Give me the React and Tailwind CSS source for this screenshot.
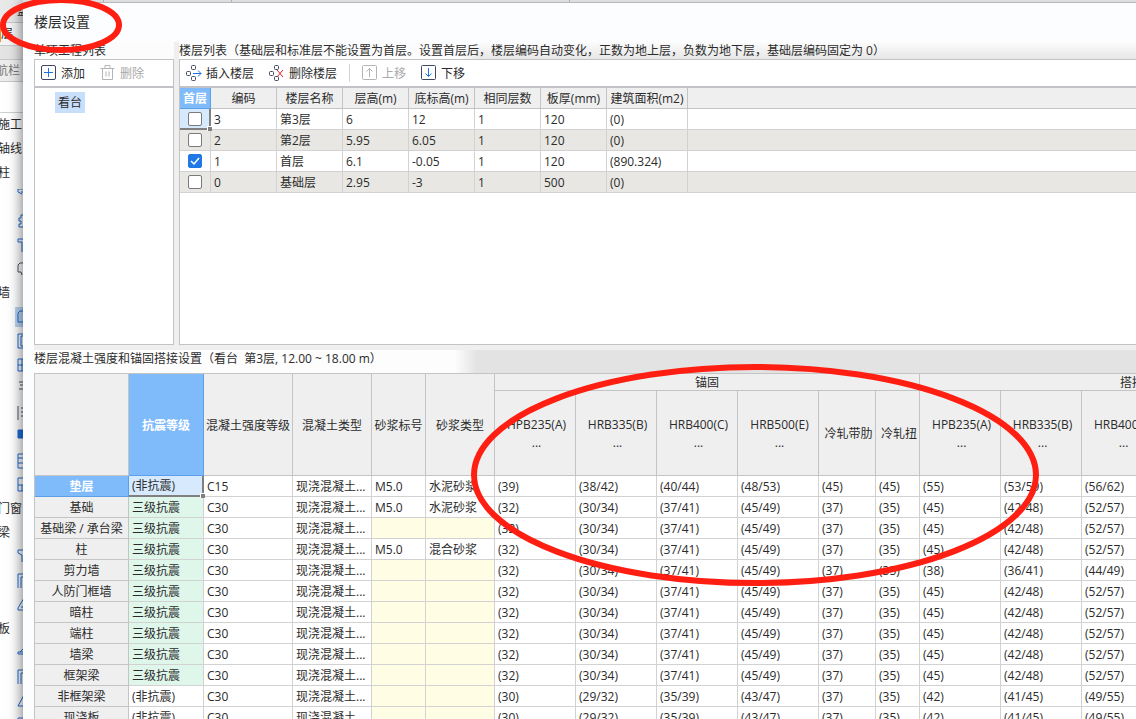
import React, {useState} from "react";

const FLOOR_COLUMNS = [
    { title: "编码", width: "w-[66px]" },
    { title: "楼层名称", width: "w-[66px]" },
    { title: "层高(m)", width: "w-[66px]" },
    { title: "底标高(m)", width: "w-[66px]" },
    { title: "相同层数", width: "w-[66px]" },
    { title: "板厚(mm)", width: "w-[66px]" },
    { title: "建筑面积(m2)", width: "w-[81px]" },
];

const FLOORS = [
    ["3", "第3层", "6", "12", "1", "120", "(0)"],
    ["2", "第2层", "5.95", "6.05", "1", "120", "(0)"],
    ["1", "首层", "6.1", "-0.05", "1", "120", "(890.324)"],
    ["0", "基础层", "2.95", "-3", "1", "500", "(0)"],
];

const STEEL_WIDTHS = [
    "w-[94px]", "w-[75px]", "w-[89px]", "w-[79px]", "w-[54px]", "w-[69px]",
    "w-[81px]", "w-[81px]", "w-[81px]", "w-[81px]", "w-[57px]", "w-[44px]",
    "w-[81px]", "w-[81px]", "w-[81px]", "w-[182px]",
];

const BAR_TYPES = [
    "HPB235(A)", "HRB335(B)", "HRB400(C)", "HRB500(E)", "冷轧带肋", "冷轧扭",
    "HPB235(A)", "HRB335(B)", "HRB400(C)", "",
];

const DEFAULT_BARS = ["(32)", "(30/34)", "(37/41)", "(45/49)", "(37)", "(35)", "(45)", "(42/48)", "(52/57)"];
const PLAIN_BARS = ["(30)", "(29/32)", "(35/39)", "(43/47)", "(37)", "(35)", "(42)", "(41/45)", "(49/55)"];

const MEMBERS = [
    { name: "垫层", level: "(非抗震)", grade: "C15", mark: "M5.0", mortar: "水泥砂浆",
        bars: ["(39)", "(38/42)", "(40/44)", "(48/53)", "(45)", "(45)", "(55)", "(53/59)", "(56/62)"] },
    { name: "基础", level: "三级抗震", grade: "C30", mark: "M5.0", mortar: "水泥砂浆", bars: DEFAULT_BARS },
    { name: "基础梁 / 承台梁", level: "三级抗震", grade: "C30", bars: DEFAULT_BARS },
    { name: "柱", level: "三级抗震", grade: "C30", mark: "M5.0", mortar: "混合砂浆", bars: DEFAULT_BARS },
    { name: "剪力墙", level: "三级抗震", grade: "C30",
        bars: ["(32)", "(30/34)", "(37/41)", "(45/49)", "(37)", "(35)", "(38)", "(36/41)", "(44/49)"] },
    { name: "人防门框墙", level: "三级抗震", grade: "C30", bars: DEFAULT_BARS },
    { name: "暗柱", level: "三级抗震", grade: "C30", bars: DEFAULT_BARS },
    { name: "端柱", level: "三级抗震", grade: "C30", bars: DEFAULT_BARS },
    { name: "墙梁", level: "三级抗震", grade: "C30", bars: DEFAULT_BARS },
    { name: "框架梁", level: "三级抗震", grade: "C30", bars: DEFAULT_BARS },
    { name: "非框架梁", level: "(非抗震)", grade: "C30", bars: PLAIN_BARS },
    { name: "现浇板", level: "(非抗震)", grade: "C30", bars: PLAIN_BARS },
];

// text rows of the component tree, or the path of an icon row
const TREE = [
    { text: "施工" }, { text: "轴线" }, { text: "柱" },
    { d: "M1 0H15M1 0V3L5 5M4 3H8" },
    { d: "M7 2H4V5H2V8H4V11H2V14H7" },
    { d: "M1 2H15M1 2V5H5V15" },
    { d: "M15 2H3L1 4V11H4L5 14", dark: true },
    { text: "墙" },
    { d: "M1 4L3 2H15M1 4V13H15", active: true },
    { d: "M1 1H15M1 1V15H15M4 3H15M4 3V13H15" },
    { d: "M1 2H15V14H1ZM1 8H15M5 2V14" },
    { d: "M2 1H6M3 4H7M2 8H15", dark: true },
    { d: "M1 1V15M4 3H6M4 7H6M4 11H6", dark: true },
    { d: "M1 1H15V9H1Z", fill: true },
    { d: "M1 1H15V15H1ZM1 5H15M1 10H15" },
    { d: "M1 1H15V14H1ZM1 8H15M5 8V14" },
    { text: "门窗" }, { text: "梁" },
    { d: "M1 1H15M1 1V4L5 6V13" },
    { d: "M1 15V1H15M4 15V4H15" },
    { d: "M1 11L7 1V13H1ZM4 10H7" },
    { text: "板" },
    { d: "M1 7H7M1 7V9H7M3 7L6 4" },
    { d: "M1 15V1H15M4 15V4H15" },
    { d: "M1 13L7 2M1 13H8" },
    { d: "M1 1H15V14H1ZM4 4H12V14" },
];

function SideTree() {
    return (
        <aside className="w-[23px] shrink-0 overflow-hidden bg-white text-xs">
            <div className="flex h-[23px] items-center border-b border-[#c8c8c8] bg-[#e9e9e9]">
                <span className="ml-[17px] whitespace-nowrap">盆</span>
            </div>
            <div className="flex h-[23px] items-center border-b border-[#c8c8c8] bg-[#f4f4f4]">
                <span className="-ml-px border-l-2 border-[#e8943a]">层</span>
            </div>
            <div className="h-[14px] border-b border-[#c8c8c8] bg-[#e4e4e4]"/>
            <div className="flex h-[22px] items-center border-b border-[#c8c8c8] bg-[#ededed] text-[#777]">
                <span className="-ml-1 whitespace-nowrap">航栏</span>
            </div>
            <div className="h-[31px] border-b border-[#d0d0d0]"/>
            <ul>
                {TREE.map((item, index) => (
                    <li key={index} className="flex h-6 items-center">
                        {item.text ? (
                            <span className="-ml-0.5 whitespace-nowrap">{item.text}</span>
                        ) : (
                            <span className={item.active ? "ml-[15px] bg-[#b9d5f3] py-0.5 pl-0.5" : "ml-[17px]"}>
                                <svg
                                    width="16"
                                    height="16"
                                    viewBox="0 0 16 16"
                                    fill={item.fill ? "#1a6fdc" : "none"}
                                    stroke={item.dark ? "#4b5468" : "#1a6fdc"}
                                >
                                    <path d={item.d}/>
                                </svg>
                            </span>
                        )}
                    </li>
                ))}
            </ul>
        </aside>
    );
}

function Icon({ children, stroke = "#3f4860" }) {
    return (
        <svg className="size-4 shrink-0" viewBox="0 0 16 16" fill="none" stroke={stroke}>
            {children}
        </svg>
    );
}

function ToolButton({ icon, label, disabled }) {
    return (
        <button
            type="button"
            disabled={disabled}
            className="flex items-center gap-1 text-xs whitespace-nowrap disabled:text-[#a9a9a9]"
        >
            {icon}
            <span className="pt-0.5">{label}</span>
        </button>
    );
}

const NODES = (
    <>
        <rect x="5.5" y="0.5" width="4" height="4" rx="1"/>
        <rect x="0.5" y="6.5" width="4" height="4" rx="1"/>
        <rect x="5.5" y="11.5" width="4" height="4" rx="1"/>
    </>
);

function UnitPanel() {
    return (
        <section className="flex w-[140px] shrink-0 flex-col">
            <h2 className="h-[17px] bg-[#fcfcfc] text-xs leading-[18px]">单项工程列表</h2>
            <div className="flex-1 border border-[#c3c3c7] bg-white">
                <div className="flex h-7 items-center gap-[15px] border-b-2 border-[#c3c3c7] pl-1.5">
                    <ToolButton
                        label="添加"
                        icon={
                            <Icon>
                                <rect x="0.5" y="0.5" width="14" height="14" rx="1.5"/>
                                <path d="M7.5 3V12M3 7.5H12" stroke="#1a73e8"/>
                            </Icon>
                        }
                    />
                    <ToolButton
                        label="删除"
                        disabled
                        icon={
                            <Icon stroke="#b4b4b4">
                                <path d="M0.5 3.5H14.5M5 3.5V0.5H10V3.5M2.5 3.5V14.5H12.5V3.5M6 6.5V11.5M9 6.5V11.5"/>
                            </Icon>
                        }
                    />
                </div>
                <div className="flex pt-1 pl-5">
                    <span className="bg-[#c7dffb] px-[3px] text-xs leading-[21px]">看台</span>
                </div>
            </div>
        </section>
    );
}

function FloorTable() {
    const [firstFloor, setFirstFloor] = useState(2);

    return (
        <table className="w-full table-fixed border-separate border-spacing-0 text-xs leading-[18px]">
            <thead>
            <tr className="bg-[#efefef] whitespace-nowrap">
                <th className="w-[31px] border-r border-b border-[#5b9fe8] bg-[#7fbafb] px-0 pt-0.5 pb-0 font-bold text-white">
                    首层
                </th>
                {FLOOR_COLUMNS.map((column) => (
                    <th key={column.title} className={`${column.width} border-r border-b border-[#c4c4c4] px-0 pt-0.5 pb-0 font-normal`}>
                        {column.title}
                    </th>
                ))}
                <th className="border-b border-[#c4c4c4] p-0"/>
            </tr>
            </thead>
            <tbody>
            {FLOORS.map((row, index) => (
                <tr key={row[0]} className="bg-white even:bg-[#e8e7e3]">
                    <td className={index === 0
                        ? "relative border-r-2 border-b-2 border-[#808080] bg-[#d6e9fd] p-0"
                        : "border-r border-b border-[#d2d2d2] p-0"}
                    >
                        <span className="relative flex justify-center">
                            <input
                                type="checkbox"
                                aria-label={`${row[1]}设为首层`}
                                checked={firstFloor === index}
                                onChange={() => setFirstFloor(index)}
                                className="size-[14px] appearance-none rounded-[2px] border border-[#7a7a7a] bg-white checked:border-[#1f78e4] checked:bg-[#1f78e4]"
                            />
                            {firstFloor === index && (
                                <svg className="pointer-events-none absolute size-[14px]" viewBox="0 0 14 14" fill="none" stroke="#fff" strokeWidth="1.5">
                                    <path d="M3 7L6 10L11 4"/>
                                </svg>
                            )}
                        </span>
                        {index === 0 && (
                            <span className="absolute -right-[3px] -bottom-[3px] z-10 size-[5px] border-t border-l border-white bg-[#808080]"/>
                        )}
                    </td>
                    {row.map((value, col) => (
                        <td key={col} className="border-r border-b border-[#d2d2d2] px-[3px] pt-0.5 pb-0">{value}</td>
                    ))}
                    <td className="border-b border-[#d2d2d2] p-0"/>
                </tr>
            ))}
            </tbody>
        </table>
    );
}

function FloorPanel() {
    return (
        <section className="flex min-w-0 flex-1 flex-col">
            <h2 className="h-[17px] overflow-hidden bg-linear-to-r from-[#fcfcfc] from-[280px] to-transparent to-[300px] text-xs leading-[18px] whitespace-nowrap">
                楼层列表（基础层和标准层不能设置为首层。设置首层后，楼层编码自动变化，正数为地上层，负数为地下层，基础层编码固定为 0）
            </h2>
            <div className="flex-1 border-y border-l border-[#c3c3c7] bg-white">
                <div className="flex h-7 items-center border-b-2 border-[#c3c3c7] pl-1.5">
                    <div className="flex gap-[15px]">
                        <ToolButton
                            label="插入楼层"
                            icon={<Icon>{NODES}<path d="M7 8.5H15M12 5.5L15 8.5L12 11.5" stroke="#1a73e8"/></Icon>}
                        />
                        <ToolButton
                            label="删除楼层"
                            icon={<Icon>{NODES}<path d="M8 5L14 12M14 5L8 12" stroke="#d8232a"/></Icon>}
                        />
                    </div>
                    <span className="mx-3 h-[18px] w-px bg-[#d4d4d4]"/>
                    <div className="flex gap-[15px]">
                        <ToolButton
                            label="上移"
                            disabled
                            icon={
                                <Icon stroke="#b4b4b4">
                                    <rect x="0.5" y="0.5" width="14" height="14" rx="1"/>
                                    <path d="M7.5 12V3.5M4.5 6.5L7.5 3.5L10.5 6.5"/>
                                </Icon>
                            }
                        />
                        <ToolButton
                            label="下移"
                            icon={
                                <Icon>
                                    <rect x="0.5" y="0.5" width="14" height="14" rx="1"/>
                                    <path d="M7.5 3V11.5M4.5 8.5L7.5 11.5L10.5 8.5" stroke="#1a73e8"/>
                                </Icon>
                            }
                        />
                    </div>
                </div>
                <FloorTable/>
            </div>
        </section>
    );
}

function StrengthTable() {
    const head = "border-r border-b border-[#c4c4c4] px-0 pt-0.5 pb-0 font-normal whitespace-nowrap";
    const activeHead = "border-r border-b border-[#5b9fe8] bg-[#7fbafb] px-0 pt-0.5 pb-0 font-bold text-white";
    const cell = "border-r border-b border-[#d2d2d2] px-[3px] pt-0.5 pb-0 whitespace-nowrap";

    return (
        <div className="overflow-hidden border-t border-l border-[#c4c4c4] bg-white">
            <table className="w-[1310px] table-fixed border-separate border-spacing-0 text-xs leading-[18px]">
                <colgroup>
                    {STEEL_WIDTHS.map((width, index) => <col key={index} className={width}/>)}
                </colgroup>
                <thead className="bg-[#efefef]">
                <tr className="leading-[14px]">
                    <th rowSpan={2} className={head}/>
                    <th rowSpan={2} className={activeHead}>抗震等级</th>
                    <th rowSpan={2} className={head}>混凝土强度等级</th>
                    <th rowSpan={2} className={head}>混凝土类型</th>
                    <th rowSpan={2} className={head}>砂浆标号</th>
                    <th rowSpan={2} className={head}>砂浆类型</th>
                    <th colSpan={6} className={head}>锚固</th>
                    <th colSpan={4} className={head}>搭接</th>
                </tr>
                <tr className="h-[85px]">
                    {BAR_TYPES.map((type, index) => (
                        <th key={index} className="border-r border-b border-[#c4c4c4] pt-0.5 pr-0 pb-0 pl-[3px] font-normal whitespace-nowrap">
                            {type}
                            {type.startsWith("H") && <span className="block">...</span>}
                        </th>
                    ))}
                </tr>
                </thead>
                <tbody>
                {MEMBERS.map((member, index) => (
                    <tr key={member.name}>
                        <th className={index === 0 ? activeHead : `${head} bg-[#efefef]`}>{member.name}</th>
                        {index === 0 ? (
                            <td className="relative border-r-2 border-b-2 border-[#808080] bg-[#d6e9fd] px-[3px] pt-px pb-0">
                                {member.level}
                                <span className="absolute -right-[3px] -bottom-[3px] z-10 size-[5px] border-t border-l border-white bg-[#808080]"/>
                            </td>
                        ) : (
                            <td className={member.level === "三级抗震" ? `${cell} bg-[#dff6ea]` : cell}>{member.level}</td>
                        )}
                        <td className={cell}>{member.grade}</td>
                        <td className={cell}>现浇混凝土...</td>
                        <td className={member.mark ? cell : `${cell} bg-[#fffde4]`}>{member.mark}</td>
                        <td className={member.mortar ? cell : `${cell} bg-[#fffde4]`}>{member.mortar}</td>
                        {member.bars.map((bar, col) => (
                            <td key={col} className={cell}>{bar}</td>
                        ))}
                        <td className={cell}/>
                    </tr>
                ))}
                </tbody>
            </table>
        </div>
    );
}

// hand drawn circles around the title and the anchorage columns
function Marks() {
    return (
        <svg className="pointer-events-none absolute top-0 left-0 z-20 size-px overflow-visible" fill="none" stroke="#ff1f12" strokeWidth="6">
            <ellipse cx="61" cy="25" rx="58" ry="25"/>
            <ellipse cx="755" cy="475" rx="281" ry="108"/>
        </svg>
    );
}

export default function App() {
    return (
        <div className="relative flex h-screen overflow-hidden bg-white font-['Open_Sans','Noto_Sans_CJK_SC',sans-serif] text-[#2b2b2b]">
            <SideTree/>
            <div className="flex min-w-0 flex-1 flex-col">
                <div className="relative z-10 flex h-0.5 shrink-0 bg-[#dedede]">
                    <span className="w-[81px] border-r border-[#b0b0b0]"/>
                    <span className="w-[128px] border-r border-[#b0b0b0]"/>
                    <span className="w-[338px] border-r border-[#b0b0b0]"/>
                </div>
                <main className="flex-1 border-t border-[#b9b9b9] bg-[#fcfdfe] pl-[11px] shadow-[0_0_14px_rgba(0,0,0,0.6)]">
                    <h1 className="h-[39px] text-sm leading-[38px]">楼层设置</h1>
                    <div className="flex h-[303px] bg-linear-to-b from-[#fcfcfc] to-[#e3e3e3] to-[20px]">
                        <UnitPanel/>
                        <div className="w-[5px] shrink-0 bg-[#efefef]"/>
                        <FloorPanel/>
                    </div>
                    <div className="h-[5px] bg-[#efefef]"/>
                    <div className="flex h-[23px] bg-[#e3e3e3]">
                        <h2 className="w-[443px] bg-linear-to-r from-[#fdfdfd] from-95% to-[#e3e3e3] text-xs leading-[18px] whitespace-pre">
                            楼层混凝土强度和锚固搭接设置（看台  第3层, 12.00 ~ 18.00 m）
                        </h2>
                    </div>
                    <StrengthTable/>
                </main>
            </div>
            <Marks/>
        </div>
    );
}
